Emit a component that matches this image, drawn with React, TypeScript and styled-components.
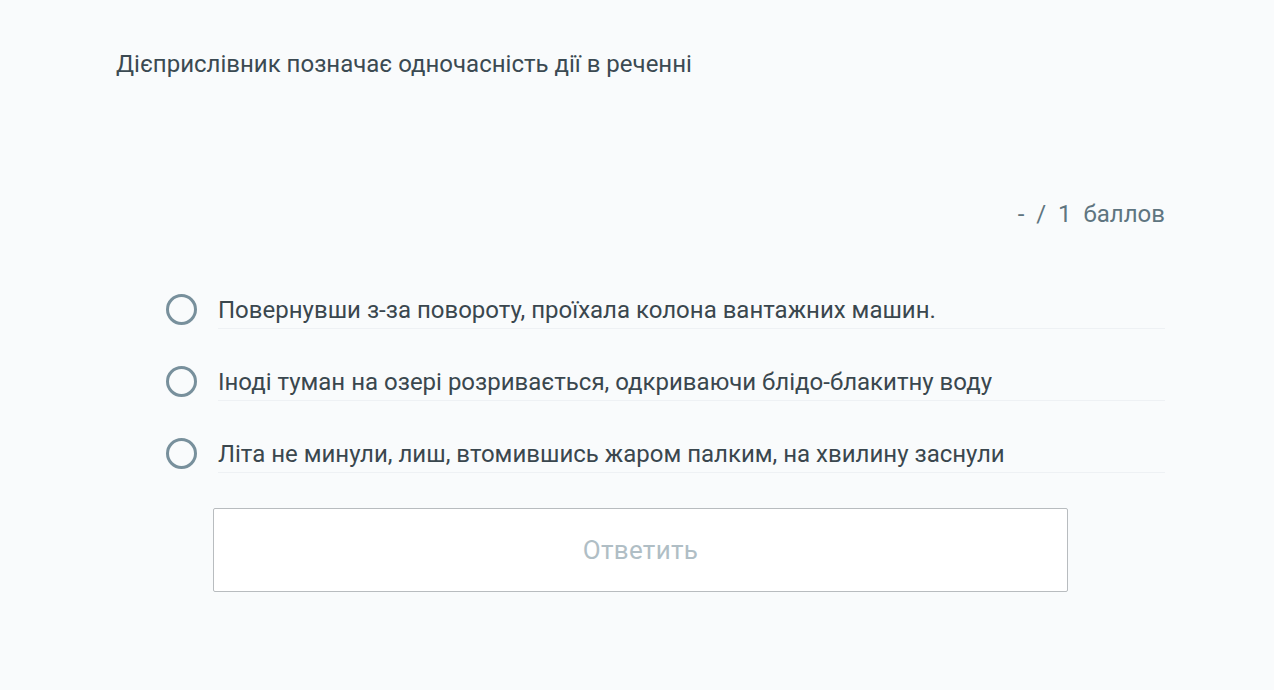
import React, { useState } from 'react';
import styled, { createGlobalStyle } from 'styled-components';

const GlobalStyle = createGlobalStyle`
  html, body {
    margin: 0;
    padding: 0;
    background: #f9fbfc;
  }
  body {
    font-family: Roboto, "Noto Sans", sans-serif;
  }
`;

const Page = styled.div`
  width: 1274px;
  height: 690px;
  box-sizing: border-box;
  padding: 48px 109px 0 116px;
  background: #f9fbfc;
  color: #37474f;
`;

const Question = styled.div`
  font-size: 24px;
  line-height: 32px;
  color: #3b4a52;
`;

const Score = styled.div`
  margin-top: 118px;
  text-align: right;
  font-size: 24px;
  line-height: 32px;
  color: #5f7580;
  word-spacing: 6px;
`;

const Options = styled.div`
  margin-top: 64px;
  padding-left: 50px;
  display: flex;
  flex-direction: column;
  gap: 37px;
`;

const Option = styled.label`
  display: flex;
  align-items: flex-start;
  cursor: pointer;
`;

const Radio = styled.span<{ $checked: boolean }>`
  flex: none;
  width: 31px;
  height: 31px;
  box-sizing: border-box;
  border-radius: 50%;
  border: 3px solid #78909c;
  margin-top: 0;
  position: relative;
  &::after {
    content: '';
    display: ${(p) => (p.$checked ? 'block' : 'none')};
    position: absolute;
    inset: 5px;
    border-radius: 50%;
    background: #78909c;
  }
`;

const OptionText = styled.span`
  flex: 1;
  margin-left: 21px;
  font-size: 24px;
  line-height: 32px;
  padding-bottom: 2px;
  color: #3a474e;
  border-bottom: 1px solid #eef1f4;
`;

const SubmitButton = styled.button`
  display: block;
  margin: 35px 0 0 97px;
  width: 855px;
  height: 84px;
  background: #ffffff;
  border: 1px solid #b8bcbf;
  border-radius: 2px;
  font-family: Roboto, "Noto Sans", sans-serif;
  font-size: 26px;
  letter-spacing: 0.3px;
  color: #b0bec5;
  cursor: default;
`;

const answers = [
  'Повернувши з-за повороту, проїхала колона вантажних машин.',
  'Іноді туман на озері розривається, одкриваючи блідо-блакитну воду',
  'Літа не минули, лиш, втомившись жаром палким, на хвилину заснули',
];

export default function App() {
  const [selected, setSelected] = useState<number | null>(null);

  return (
    <>
      <GlobalStyle />
      <Page>
        <Question>Дієприслівник позначає одночасність дії в реченні</Question>
        <Score>- / 1 баллов</Score>
        <Options>
          {answers.map((a, i) => (
            <Option key={i} onClick={() => setSelected(i)}>
              <Radio $checked={selected === i} />
              <OptionText>{a}</OptionText>
            </Option>
          ))}
        </Options>
        <SubmitButton disabled={selected === null}>Ответить</SubmitButton>
      </Page>
    </>
  );
}
